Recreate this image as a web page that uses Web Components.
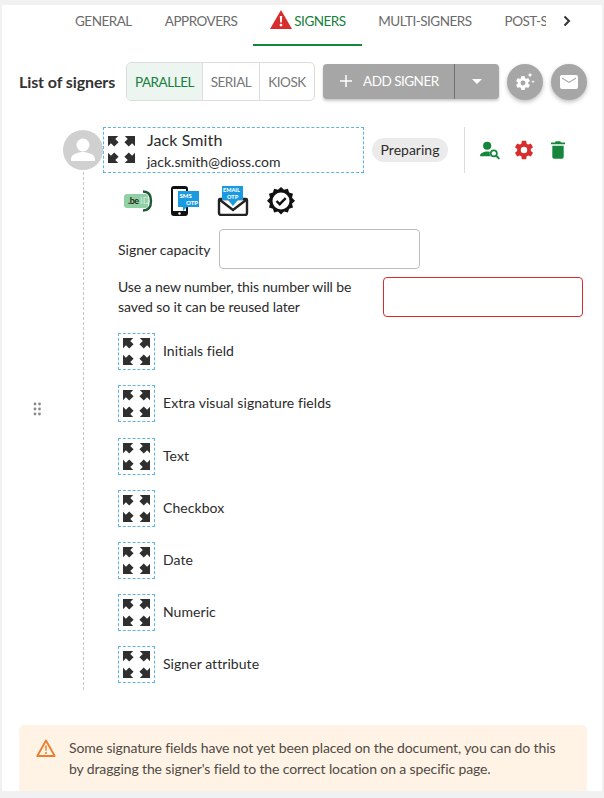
<!DOCTYPE html>
<html lang="en">
<head>
<meta charset="utf-8">
<title>Signers</title>
<style>
  html, body { margin: 0; height: 100%; }
  body { background: #f1f1f1; font-family: Lato, "Open Sans", sans-serif; color: #2b2b2b; overflow: hidden; }
</style>
</head>
<body>
<signer-panel></signer-panel>
<script>
// small shared drawing for the dashed "move" arrows
const ARROW = "M0 0h9.800L7 2.800l3.200 3.200-4.200 4.200L2.800 7 0 9.800z";
const ARROWS = `
  <path d="${ARROW}"/>
  <path d="${ARROW}" transform="matrix(-1 0 0 1 26 0)"/>
  <path d="${ARROW}" transform="matrix(1 0 0 -1 0 26)"/>
  <path d="${ARROW}" transform="matrix(-1 0 0 -1 26 26)"/>`;

const GEAR = "M19.430 12.980a7.800 7.800 0 0 0 0-1.960l2.110-1.650a.5.5 0 0 0 .12-.64l-2-3.460a.5.5 0 0 0-.61-.22l-2.490 1a7.300 7.300 0 0 0-1.690-.98l-.38-2.650A.49.490 0 0 0 14 2h-4a.49.490 0 0 0-.49.420l-.38 2.650c-.61.250-1.170.590-1.690.980l-2.490-1a.5.5 0 0 0-.61.220l-2 3.460a.49.490 0 0 0 .12.640l2.110 1.650a7.900 7.900 0 0 0 0 1.960l-2.110 1.650a.5.5 0 0 0-.12.640l2 3.460c.12.220.39.300.61.220l2.490-1c.52.400 1.080.730 1.690.980l.38 2.650c.03.240.24.420.49.420h4c.25 0 .46-.18.49-.42l.38-2.650a7.700 7.700 0 0 0 1.690-.98l2.490 1c.23.090.49 0 .61-.22l2-3.460a.5.5 0 0 0-.12-.64zM12 15.500a3.500 3.500 0 1 1 0-7 3.500 3.500 0 0 1 0 7z";

class TabBar extends HTMLElement {
  constructor() {
    super();
    this.attachShadow({ mode: "open" });
  }

  connectedCallback() {
    this.shadowRoot.innerHTML = `
      <style>
        :host { display: flex; height: 41px; font-size: 13.5px; color: #6b6b6b; letter-spacing: -0.5px; }
        .strip { display: flex; width: 487px; margin-left: 57px; overflow: hidden; white-space: nowrap; }
        .tab { display: flex; align-items: center; padding: 0 17px 9px 16px; box-sizing: border-box; height: 41px; flex: none; }
        .active { color: #15803d; border-bottom: 2px solid #15863c; padding: 0 0 7px 17px; width: 109px; margin-left: -1px; margin-right: 0; }
        .active svg { margin-right: 2px; margin-top: -3px; }
        .active + .tab { padding-left: 16px; }
        .next { flex: 1; display: flex; align-items: center; padding: 0 0 9px 15px; }
      </style>
      <div class="strip">
        <div class="tab">GENERAL</div>
        <div class="tab">APPROVERS</div>
        <div class="tab active">
          <svg width="22" height="19" viewBox="0 0 22 19"><path fill="#d92d2d" d="M11 0 22 19H0z"/><path fill="#fff" d="M9.800 6h2.400l-.4 6.500h-1.600zM11 13.700a1.400 1.400 0 1 1 0 2.800 1.400 1.400 0 0 1 0-2.800z"/></svg>
          SIGNERS
        </div>
        <div class="tab">MULTI-SIGNERS</div>
        <div class="tab">POST-SIGNING</div>
      </div>
      <div class="next">
        <svg width="12" height="12" viewBox="0 0 12 12"><path d="M3.500 1.500 8 6l-4.500 4.500" fill="none" stroke="#333" stroke-width="2"/></svg>
      </div>
    `;
  }
}

class ModeSwitch extends HTMLElement {
  constructor() {
    super();
    this.attachShadow({ mode: "open" });
  }

  connectedCallback() {
    this.shadowRoot.innerHTML = `
      <style>
        :host { display: flex; height: 37px; border: 1px solid #dcdcdc; border-radius: 5px; overflow: hidden; font-size: 13.5px; letter-spacing: -.45px; color: #777; box-sizing: content-box; }
        div { display: flex; align-items: center; justify-content: center; }
        .on { width: 75px; background: #edf5f0; color: #15803d; }
        .serial { width: 56px; border-left: 1px solid #dcdcdc; }
        .kiosk { width: 54px; border-left: 1px solid #dcdcdc; }
      </style>
      <div class="on">PARALLEL</div>
      <div class="serial">SERIAL</div>
      <div class="kiosk">KIOSK</div>
    `;
  }
}

class AddButton extends HTMLElement {
  constructor() {
    super();
    this.attachShadow({ mode: "open" });
  }

  connectedCallback() {
    this.shadowRoot.innerHTML = `
      <style>
        :host { display: flex; width: 176px; height: 35px; background: #a6a6a6; border-radius: 4px; color: #fff; font-size: 13.5px; letter-spacing: -0.5px;
          box-shadow: 0 2px 3px rgba(0,0,0,.22); }
        .main { width: 132px; display: flex; align-items: center; border-right: 1px solid #6f6f6f; box-sizing: border-box; padding: 0 0 2px 17px; }
        .main svg { margin-right: 11px; }
        .drop { flex: 1; display: flex; align-items: center; justify-content: center; }
      </style>
      <div class="main">
        <svg width="12" height="12" viewBox="0 0 12 12"><path d="M6 0v12M0 6h12" stroke="#fff" stroke-width="1.500"/></svg>
        ADD SIGNER
      </div>
      <div class="drop"><svg width="10" height="5" viewBox="0 0 10 5"><path d="M0 0h10L5 5z" fill="#fff"/></svg></div>
    `;
  }
}

class RoundButton extends HTMLElement {
  constructor() {
    super();
    this.attachShadow({ mode: "open" });
  }

  connectedCallback() {
    this.shadowRoot.innerHTML = `
      <style>
        :host { display: flex; width: 36px; height: 36px; border-radius: 50%; background: #a6a6a6; align-items: center; justify-content: center;
          box-shadow: 0 2px 4px rgba(0,0,0,.25); }
      </style>
      <slot></slot>
    `;
  }
}

class MoveBox extends HTMLElement {
  constructor() {
    super();
    this.attachShadow({ mode: "open" });
  }

  connectedCallback() {
    this.shadowRoot.innerHTML = `
      <style>
        :host { display: flex; flex: none; width: 37px; height: 37px; box-sizing: border-box; border: 1px dashed #5eb3e6; align-items: center; justify-content: center; }
      </style>
      <svg width="27" height="27" viewBox="0 0 26 26" fill="#2f2f2f">${ARROWS}</svg>
    `;
  }
}

class SignerHead extends HTMLElement {
  constructor() {
    super();
    this.attachShadow({ mode: "open" });
  }

  connectedCallback() {
    this.shadowRoot.innerHTML = `
      <style>
        :host { display: flex; align-items: center; height: 46px; }
        .avatar { width: 40px; height: 40px; flex: none; }
        .box { width: 261px; height: 46px; box-sizing: border-box; border: 1px dashed #5eb3e6; display: flex; padding: 2px 0 0 4px; }
        .box svg { flex: none; margin: 6px 12px 0 0; }
        .who { display: flex; flex-direction: column; }
        .name { font-size: 16px; line-height: 19px; letter-spacing: .1px; }
        .mail { font-size: 14px; line-height: 17px; margin-top: 4px; }
        .chip { margin-left: 8px; width: 76px; height: 24px; padding-bottom: 2px; box-sizing: border-box; border-radius: 12px; background: #ebebeb; font-size: 14px; display: flex; align-items: center; justify-content: center; }
        .sep { width: 1px; height: 46px; background: #dcdcdc; margin: 0 15px 0 16px; }
        .acts { display: flex; align-items: center; }
      </style>
      <svg class="avatar" viewBox="0 0 40 40"><circle cx="20" cy="20" r="20" fill="#d0d0d0"/><circle cx="20" cy="15" r="6.500" fill="#fff"/><path d="M8 29c0-5 8-7 12-7s12 2 12 7v2H8z" fill="#fff"/></svg>
      <div class="box">
        <svg width="27" height="27" viewBox="0 0 26 26" fill="#2f2f2f">${ARROWS}</svg>
        <div class="who"><span class="name">Jack Smith</span><span class="mail">jack.smith@dioss.com</span></div>
      </div>
      <div class="chip">Preparing</div>
      <div class="sep"></div>
      <div class="acts">
        <svg width="21" height="19" viewBox="0 0 22 20" fill="#15863c" style="margin-right:12px">
          <circle cx="7.500" cy="5" r="4.300"/><path d="M0 16c0-3.500 4-5 7.500-5 1 0 2 .1 2.800.4a6 6 0 0 0 .7 4.600z"/>
          <circle cx="14.500" cy="13" r="3.200" fill="none" stroke="#15863c" stroke-width="1.800"/><path d="m16.800 15.300 3.500 3.500" stroke="#15863c" stroke-width="2"/>
        </svg>
        <svg width="22" height="22" viewBox="0 0 24 24" fill="#d92d2d" style="margin-right:16px"><path d="${GEAR}"/></svg>
        <svg width="14" height="18" viewBox="0 0 16 20" fill="#15863c"><path d="M5.500 0h5l1 1.500H16v2H0v-2h4.500zM1.500 5h13v13a2 2 0 0 1-2 2h-9a2 2 0 0 1-2-2z"/></svg>
      </div>
    `;
  }
}

class FieldRow extends HTMLElement {
  constructor() {
    super();
    this.attachShadow({ mode: "open" });
  }

  connectedCallback() {
    this.shadowRoot.innerHTML = `
      <style>
        :host { display: flex; align-items: center; gap: 8px; height: 37px; font-size: 14px; letter-spacing: .06px; }
        span { margin-bottom: 2px; }
      </style>
      <move-box></move-box><span><slot></slot></span>
    `;
  }
}

class NoticeBox extends HTMLElement {
  constructor() {
    super();
    this.attachShadow({ mode: "open" });
  }

  connectedCallback() {
    this.shadowRoot.innerHTML = `
      <style>
        :host { display: flex; background: #fff3e6; border-radius: 5px; padding: 12px 16px 20px 17px; font-size: 14px; line-height: 21px; letter-spacing: -.12px; color: #4f4a44; height: 90px; box-sizing: border-box; }
        svg { flex: none; margin: 2px 13px 0 0; }
      </style>
      <svg width="20" height="18" viewBox="0 0 20 18"><path d="M10 1.500 18.700 17H1.300z" fill="none" stroke="#ee7d2b" stroke-width="1.800" stroke-linejoin="round"/><path d="M9.200 6.500h1.600l-.2 5.500H9.400zM10 13a1 1 0 1 1 0 2 1 1 0 0 1 0-2z" fill="#ee7d2b"/></svg>
      <div><slot></slot></div>
    `;
  }
}

class SignerPanel extends HTMLElement {
  constructor() {
    super();
    this.attachShadow({ mode: "open" });
  }

  connectedCallback() {
    const fields = ["Initials field", "Extra visual signature fields", "Text", "Checkbox", "Date", "Numeric", "Signer attribute"];
    this.shadowRoot.innerHTML = `
      <style>
        :host { display: block; margin: 5px 2px 0 2px; width: 600px; height: 786px; background: #fff; overflow: hidden; }
        .tools { display: flex; align-items: center; margin: 16px 0 0 17px; height: 39px; }
        .tools h2 { margin: 0 11px 0 0; font-size: 16px; font-weight: 700; width: 96px; white-space: nowrap; color: #333; letter-spacing: -.1px; }
        add-button { margin: 0 8px; }
        round-button + round-button { margin-left: 8px; }
        .card { position: relative; margin: 26px 0 0 61px; height: 563px; }
        .rail { position: absolute; left: 20px; top: 45px; bottom: 0; border-left: 1px dashed #c8c8c8; }
        .grip { position: absolute; left: -31px; top: 275px; display: block; }
        .methods { display: flex; align-items: center; height: 30px; margin: 13px 0 0 60px; }
        .cap { display: flex; align-items: center; margin: 13px 0 0 55px; font-size: 14px; }
        .cap label { width: 101px; }
        .box { height: 40px; box-sizing: border-box; border: 1px solid #bdbdbd; border-radius: 4px; background: #fff; width: 201px; }
        .phone { display: flex; align-items: center; margin: 8px 0 0 55px; font-size: 14px; line-height: 20px; letter-spacing: -.09px; }
        .phone label { width: 265px; }
        .phone .box { border-color: #d92d2d; width: 200px; }
        .fields { display: flex; flex-direction: column; gap: 15.2px; margin: 16.2px 0 0 55px; }
        notice-box { margin: 35px 15px 0 17px; }
      </style>
      <tab-bar></tab-bar>
      <div class="tools">
        <h2>List of signers</h2>
        <mode-switch></mode-switch>
        <add-button></add-button>
        <round-button>
          <svg width="22" height="22" viewBox="0 0 22 22" fill="#fff">
            <path transform="translate(.6 3.600) scale(.7)" d="${GEAR}"/>
            <path d="M16 1.500l.7 1.800 1.800.7-1.800.7-.7 1.800-.7-1.800-1.800-.7 1.800-.7zM19 9l.5 1.300 1.300.5-1.300.5-.5 1.300-.5-1.300-1.300-.5 1.300-.5z"/>
          </svg>
        </round-button>
        <round-button>
          <svg width="18" height="14" viewBox="0 0 18 14"><path d="M2 0h14a2 2 0 0 1 2 2v10a2 2 0 0 1-2 2H2a2 2 0 0 1-2-2V2a2 2 0 0 1 2-2zm0 2.500v1.300L9 8l7-4.200V2.500L9 6.700z" fill="#fff" fill-rule="evenodd"/></svg>
        </round-button>
      </div>
      <div class="card">
        <div class="rail"></div>
        <svg class="grip" width="10" height="14" viewBox="0 0 10 14" fill="#888"><circle cx="3" cy="2" r="1.400"/><circle cx="7.500" cy="2" r="1.400"/><circle cx="3" cy="7" r="1.400"/><circle cx="7.500" cy="7" r="1.400"/><circle cx="3" cy="12" r="1.400"/><circle cx="7.500" cy="12" r="1.400"/></svg>
        <signer-head></signer-head>
        <div class="methods">
          <svg width="30" height="22" viewBox="0 0 30 22" style="margin-right:17px">
            <rect x="1" y="4" width="24" height="14" rx="3" fill="#8fd0a5"/>
            <path d="M20 1.500c6 0 8 3.500 8 9.500s-2 9.500-8 9.500" fill="none" stroke="#1d5a36" stroke-width="2.400"/>
            <text x="5" y="14" font-family="Lato, sans-serif" font-size="9" font-weight="700" letter-spacing="-.5" fill="#2a2a1a">.be</text>
            <text x="17" y="14" font-family="Lato, sans-serif" font-size="9" font-weight="700" fill="#c5e5d0">ID</text>
          </svg>
          <svg width="30" height="30" viewBox="0 0 30 30" style="margin-right:17px">
            <rect x="1" y="0" width="17" height="30" rx="3" fill="#111"/><rect x="3" y="3" width="13" height="22" fill="#fff"/><circle cx="9.500" cy="27.500" r="1.200" fill="#fff"/>
            <path d="M8 5h21v16H17l-4 4v-4H8z" fill="#1a9ae0"/>
            <text x="9.500" y="11.500" font-family="Lato, sans-serif" font-size="6" font-weight="900" fill="#fff">SMS</text>
            <text x="16" y="18.500" font-family="Lato, sans-serif" font-size="6" font-weight="900" fill="#fff">OTP</text>
          </svg>
          <svg width="32" height="30" viewBox="0 0 32 30" style="margin-right:18px">
            <path d="M3 13h26a1 1 0 0 1 1 1v13a2 2 0 0 1-2 2H4a2 2 0 0 1-2-2V14a1 1 0 0 1 1-1z" fill="#fff" stroke="#222" stroke-width="2.400"/>
            <path d="M3 14 16 24 29 14" fill="none" stroke="#222" stroke-width="2.400"/>
            <path d="M5 0h21v14h-5l-5 6-5-6H5z" fill="#1a9ae0"/>
            <text x="6" y="6" font-family="Lato, sans-serif" font-size="5.500" font-weight="900" fill="#fff">EMAIL</text>
            <text x="10" y="12.500" font-family="Lato, sans-serif" font-size="5.500" font-weight="900" fill="#fff">OTP</text>
          </svg>
          <svg width="28" height="28" viewBox="0 0 28 28">
            <path fill="#111" d="m14 0 3 2.800 3.900-1 1.200 3.800 3.900 1.200-1 3.900 3 3-3 3 1 3.900-3.900 1.200-1.200 3.800-3.900-1-3 2.800-3-2.800-3.900 1-1.200-3.800-3.900-1.200 1-3.900-3-3 3-3-1-3.900 3.900-1.200 1.200-3.800 3.900 1z"/>
            <circle cx="14" cy="14" r="8.500" fill="#fff"/>
            <path d="m9.500 14 3.200 3.200 6-6" fill="none" stroke="#111" stroke-width="2.400"/>
          </svg>
        </div>
        <div class="cap"><label>Signer capacity</label><div class="box"></div></div>
        <div class="phone"><label>Use a new number, this number will be<br>saved so it can be reused later</label><div class="box"></div></div>
        <div class="fields">${fields.map((f) => `<field-row>${f}</field-row>`).join("")}</div>
      </div>
      <notice-box>Some signature fields have not yet been placed on the document, you can do this by dragging the signer's field to the correct location on a specific page.</notice-box>
    `;
  }
}

customElements.define("tab-bar", TabBar);
customElements.define("mode-switch", ModeSwitch);
customElements.define("add-button", AddButton);
customElements.define("round-button", RoundButton);
customElements.define("move-box", MoveBox);
customElements.define("signer-head", SignerHead);
customElements.define("field-row", FieldRow);
customElements.define("notice-box", NoticeBox);
customElements.define("signer-panel", SignerPanel);
</script>
</body>
</html>
